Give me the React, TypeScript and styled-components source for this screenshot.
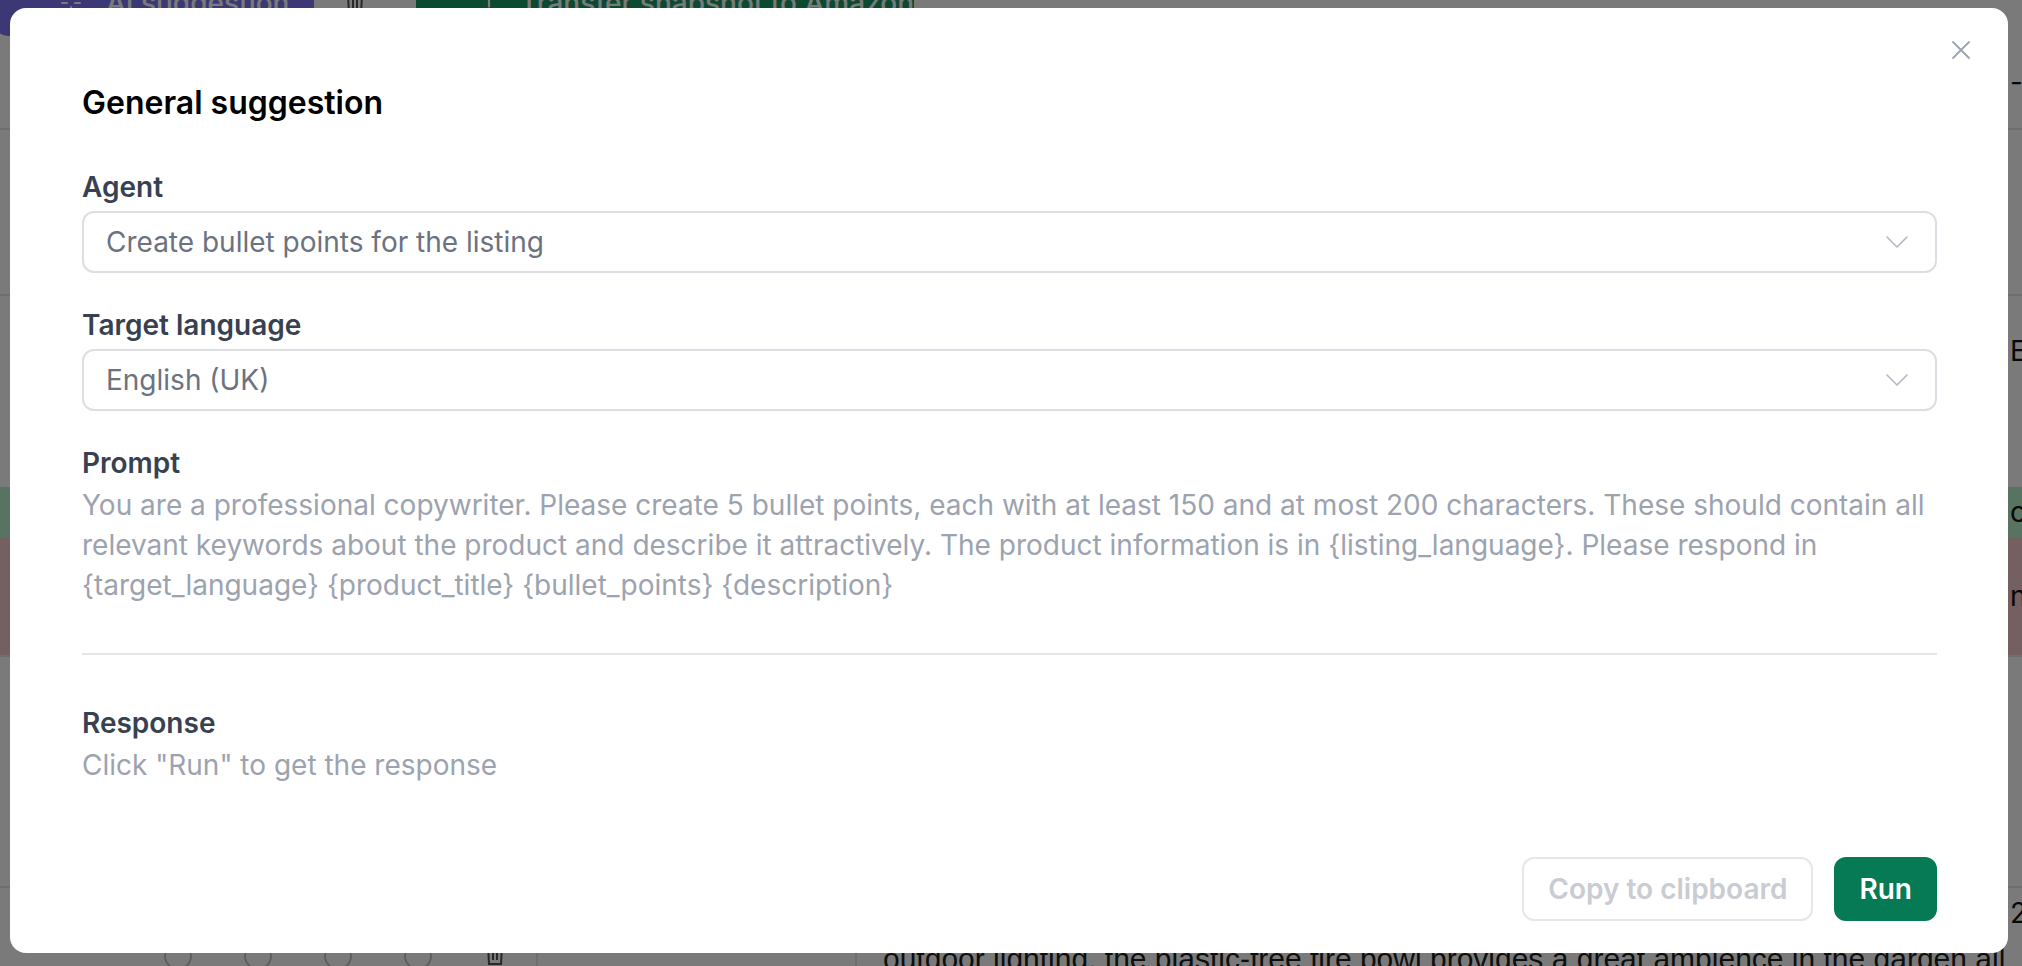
import React from "react";
import styled, { createGlobalStyle } from "styled-components";

const GlobalStyle = createGlobalStyle`
  html, body { margin: 0; padding: 0; }
  body {
    font-family: Inter, "Noto Sans", "Liberation Sans", sans-serif;
    background: #ffffff;
    -webkit-font-smoothing: antialiased;
  }
  * { box-sizing: border-box; }
`;

/* ---------- background page (seen only at the edges) ---------- */

const Page = styled.div`
  width: 2022px;
  height: 966px;
  overflow: hidden;
  display: flex;
  flex-direction: column;
  background: #ffffff;
`;

const Toolbar = styled.div`
  display: flex;
  align-items: center;
  height: 66px;
  margin-top: -30px;
  margin-left: -6px;
  gap: 30px;
  flex-shrink: 0;
`;

const ToolButton = styled.div<{ $bg: string; $w: number; $ml?: number }>`
  display: flex;
  align-items: center;
  gap: 22px;
  width: ${(p) => p.$w}px;
  height: 66px;
  margin-left: ${(p) => p.$ml || 0}px;
  padding: 0 0 0 64px;
  border-radius: 14px;
  background: ${(p) => p.$bg};
  color: #ffffff;
  font-size: 28px;
  font-weight: 500;
  white-space: nowrap;
`;

const TrashSlot = styled.div`
  display: flex;
  align-items: center;
  color: #555;
`;

const Middle = styled.div`
  flex: 1;
  display: flex;
  flex-direction: column;
  min-height: 0;
  overflow: hidden;
`;

const BgRow = styled.div<{ $h: number; $bg?: string; $line?: boolean }>`
  display: grid;
  grid-template-columns: 2010px 1fr;
  align-items: center;
  height: ${(p) => p.$h}px;
  background: ${(p) => p.$bg || "transparent"};
  border-bottom: ${(p) => (p.$line ? "2px solid #e5e7eb" : "none")};
  font-size: 28px;
  color: #111;
  flex-shrink: 0;
`;

const BgCell = styled.div`
  white-space: nowrap;
  overflow: hidden;
`;

const BottomRow = styled.div`
  display: flex;
  align-items: flex-start;
  height: 26px;
  padding-left: 164px;
  flex-shrink: 0;
`;

const Radio = styled.span`
  width: 28px;
  height: 28px;
  border-radius: 50%;
  border: 2px solid #c7c7c7;
  margin-right: 52px;
  margin-top: 2px;
  flex-shrink: 0;
`;

const VLine = styled.span<{ $ml: number }>`
  width: 2px;
  height: 30px;
  background: #e5e7eb;
  margin-left: ${(p) => p.$ml}px;
  flex-shrink: 0;
`;

const BottomText = styled.span`
  margin-left: 26px;
  margin-top: 2px;
  font-family: "Liberation Sans", Arial, sans-serif;
  font-size: 30px;
  line-height: 34px;
  color: #1f1f1f;
  white-space: nowrap;
`;

/* ---------- overlay + modal ---------- */

const Overlay = styled.div`
  position: fixed;
  inset: 0;
  background: rgba(0, 0, 0, 0.52);
  display: flex;
  padding: 8px 14px 13px 10px;
`;

const Modal = styled.div`
  position: relative;
  flex: 1;
  display: flex;
  flex-direction: column;
  background: #ffffff;
  border-radius: 16px;
  padding: 71px 71px 32px 72px;
  font-family: Inter, "Noto Sans", sans-serif;
`;

const CloseButton = styled.button`
  position: absolute;
  top: 31px;
  right: 36px;
  width: 22px;
  height: 22px;
  padding: 0;
  border: none;
  background: none;
  color: #9ca3af;
  display: flex;
  align-items: center;
  justify-content: center;
  cursor: pointer;
`;

const Title = styled.h2`
  margin: 0 0 40px 0;
  font-size: 32px;
  line-height: 48px;
  font-weight: 600;
  color: #000000;
`;

const Form = styled.div`
  display: flex;
  flex-direction: column;
  gap: 32px;
`;

const Field = styled.div<{ $gap: number }>`
  display: flex;
  flex-direction: column;
  gap: ${(p) => p.$gap}px;
`;

const Label = styled.div`
  font-size: 28px;
  line-height: 40px;
  font-weight: 600;
  color: #374151;
`;

const Select = styled.div`
  height: 62px;
  border: 2px solid #dcdee3;
  border-radius: 12px;
  padding: 0 27px 0 22px;
  display: flex;
  align-items: center;
  justify-content: space-between;
  font-size: 28px;
  color: #6b7280;
`;

const Muted = styled.div`
  font-size: 28px;
  line-height: 40px;
  color: #9ca3af;
`;

const Divider = styled.hr`
  margin: 48px 0;
  border: none;
  height: 2px;
  background: #e5e7eb;
`;

const Footer = styled.div`
  margin-top: auto;
  display: flex;
  justify-content: flex-end;
  gap: 21px;
`;

const Button = styled.button<{ $primary?: boolean }>`
  height: 64px;
  padding: 0 ${(p) => (p.$primary ? 23 : 24)}px;
  border-radius: 12px;
  font-family: Inter, "Noto Sans", sans-serif;
  font-size: 28px;
  line-height: 40px;
  font-weight: 600;
  border: ${(p) => (p.$primary ? "2px solid #067a55" : "2px solid #e5e7eb")};
  background: ${(p) => (p.$primary ? "#067a55" : "#ffffff")};
  color: ${(p) => (p.$primary ? "#ffffff" : "#c9ccd3")};
`;

const Chevron = () => (
  <svg width="22" height="12" viewBox="0 0 22 12" fill="none">
    <path d="M1 1l10 10L21 1" stroke="#b4b8bf" strokeWidth="1.6" strokeLinecap="round" strokeLinejoin="round" />
  </svg>
);

const CloseIcon = () => (
  <svg width="20" height="20" viewBox="0 0 20 20" fill="none">
    <path d="M2 2l16 16M18 2L2 18" stroke="currentColor" strokeWidth="1.8" strokeLinecap="round" />
  </svg>
);

const Sparkle = () => (
  <svg width="26" height="26" viewBox="0 0 24 24" fill="none" stroke="#fff" strokeWidth="2">
    <path d="M12 3v6M12 15v6M3 12h6M15 12h6" />
  </svg>
);

const Trash = () => (
  <svg width="22" height="26" viewBox="0 0 22 26" fill="none" stroke="currentColor" strokeWidth="2">
    <path d="M2 5h18M8 5V2h6v3M4 5l1 19h12l1-19M9 10v10M13 10v10" />
  </svg>
);

const Upload = () => (
  <svg width="20" height="26" viewBox="0 0 20 26" fill="none" stroke="#fff" strokeWidth="2.4">
    <path d="M10 2v16M4 8l6-6 6 6M3 22h14" />
  </svg>
);

export default function App() {
  return (
    <>
      <GlobalStyle />
      <Page>
        <Toolbar>
          <ToolButton $bg="#7d76f5" $w={320}>
            <Sparkle />
            AI suggestion
          </ToolButton>
          <TrashSlot>
            <Trash />
          </TrashSlot>
          <ToolButton $bg="#1b9966" $w={498} $ml={20}>
            <Upload />
            Transfer snapshot to Amazon
          </ToolButton>
        </Toolbar>
        <Middle>
          <BgRow $h={94} $line>
            <span />
            <BgCell>- </BgCell>
          </BgRow>
          <BgRow $h={166} $line>
            <span />
            <BgCell />
          </BgRow>
          <BgRow $h={110}>
            <span />
            <BgCell>E</BgCell>
          </BgRow>
          <BgRow $h={81}>
            <span />
            <BgCell />
          </BgRow>
          <BgRow $h={50} $bg="#b9f0cc">
            <span />
            <BgCell>cu</BgCell>
          </BgRow>
          <BgRow $h={120} $bg="#f3c9c9" $line>
            <span />
            <BgCell>n</BgCell>
          </BgRow>
          <BgRow $h={231} $line>
            <span />
            <BgCell />
          </BgRow>
          <BgRow $h={50}>
            <span />
            <BgCell>2</BgCell>
          </BgRow>
        </Middle>
        <BottomRow>
          <Radio />
          <Radio />
          <Radio />
          <Radio />
          <TrashSlot>
            <Trash />
          </TrashSlot>
          <VLine $ml={30} />
          <VLine $ml={317} />
          <BottomText>
            outdoor lighting, the plastic-free fire bowl provides a great ambience in the garden all
          </BottomText>
        </BottomRow>
      </Page>

      <Overlay>
        <Modal>
          <CloseButton aria-label="Close">
            <CloseIcon />
          </CloseButton>
          <Title>General suggestion</Title>
          <Form>
            <Field $gap={4}>
              <Label>Agent</Label>
              <Select>
                Create bullet points for the listing
                <Chevron />
              </Select>
            </Field>
            <Field $gap={4}>
              <Label>Target language</Label>
              <Select>
                English (UK)
                <Chevron />
              </Select>
            </Field>
            <Field $gap={2}>
              <Label>Prompt</Label>
              <Muted>
                You are a professional copywriter. Please create 5 bullet points, each with at least 150 and at
                most 200 characters. These should contain all relevant keywords about the product and describe
                it attractively. The product information is in {"{listing_language}"}. Please respond in{" "}
                {"{target_language}"} {"{product_title}"} {"{bullet_points}"} {"{description}"}
              </Muted>
            </Field>
          </Form>
          <Divider />
          <Field $gap={2}>
            <Label>Response</Label>
            <Muted>Click "Run" to get the response</Muted>
          </Field>
          <Footer>
            <Button>Copy to clipboard</Button>
            <Button $primary>Run</Button>
          </Footer>
        </Modal>
      </Overlay>
    </>
  );
}
